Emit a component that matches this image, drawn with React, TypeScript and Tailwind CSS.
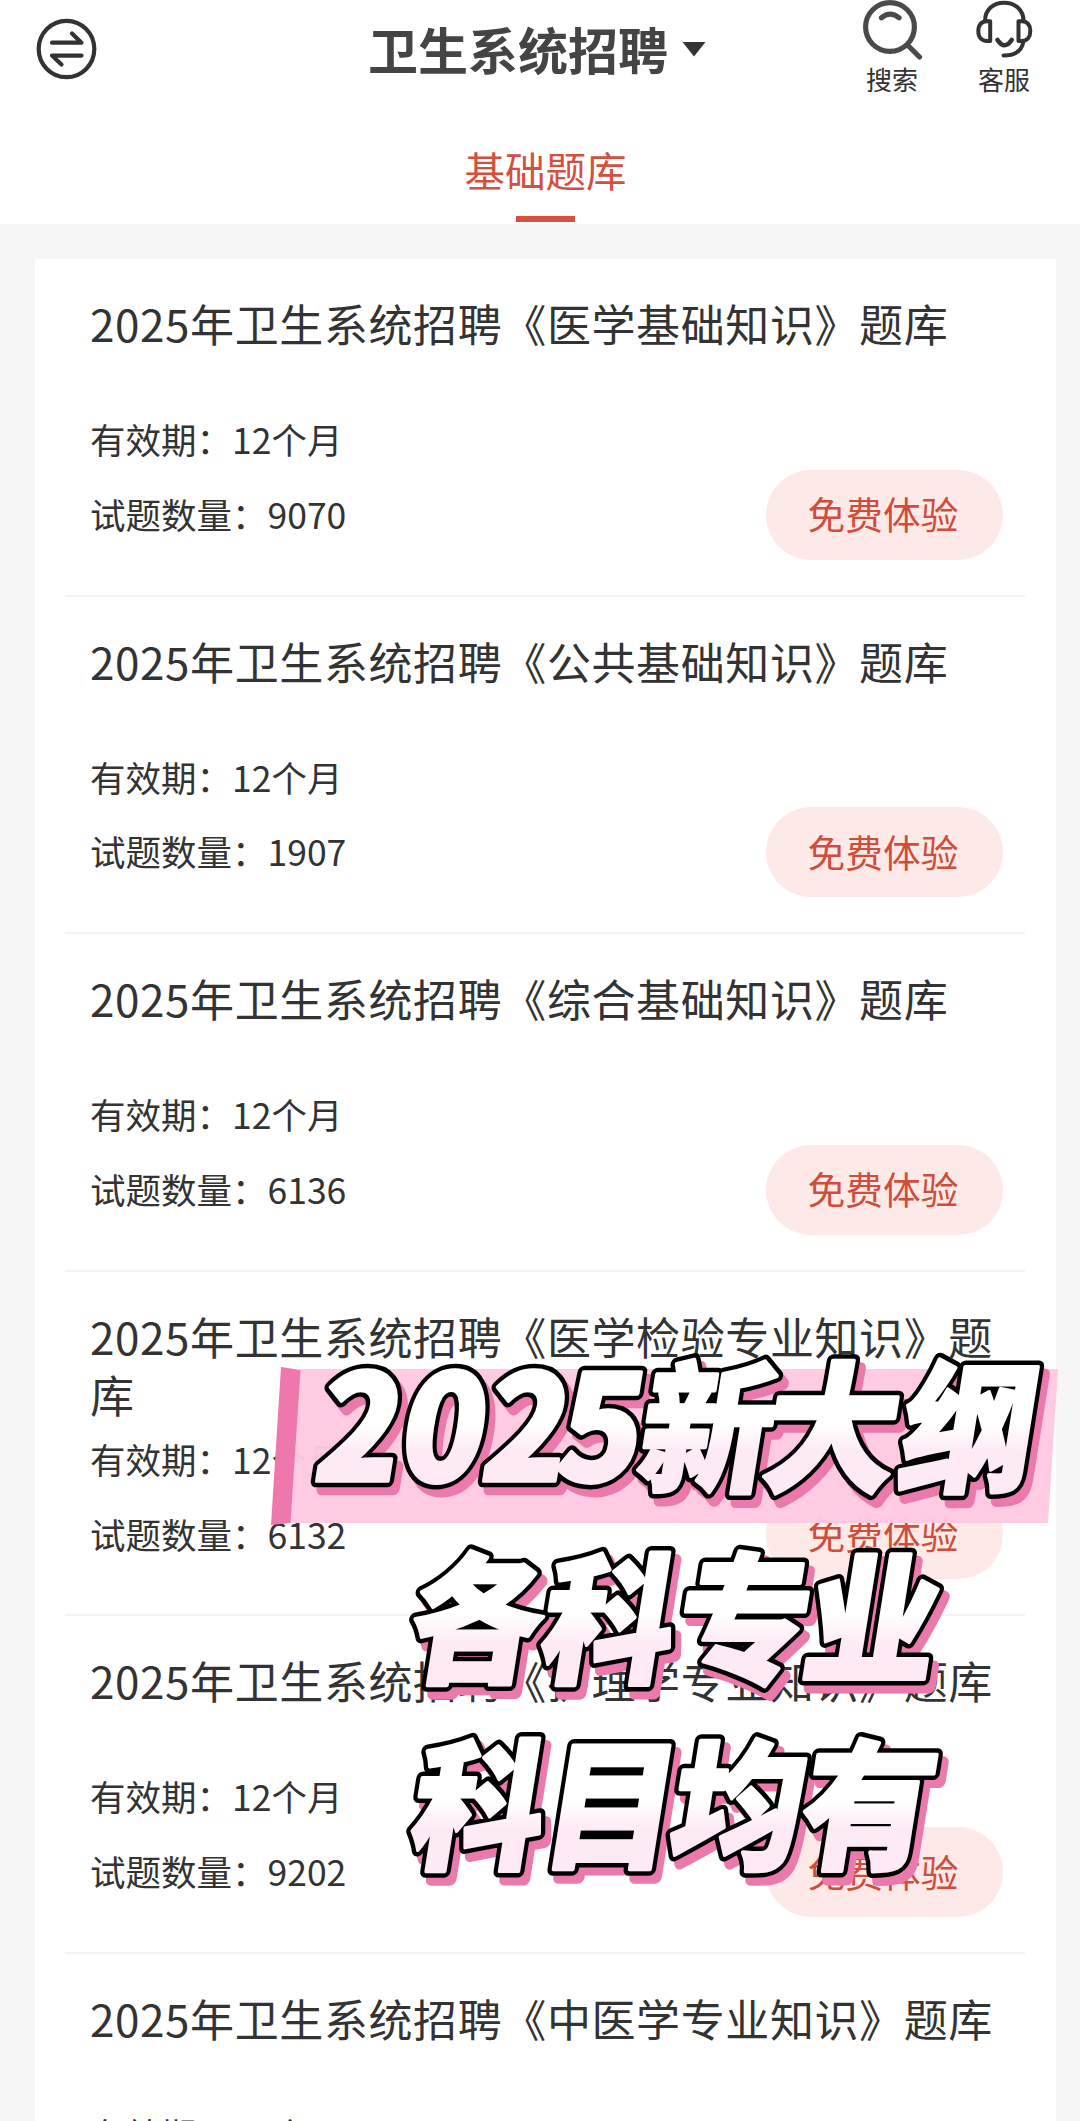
import React from "react";

type Bank = { subject: string; count: number };

const banks: Bank[] = [
  { subject: "医学基础知识", count: 9070 },
  { subject: "公共基础知识", count: 1907 },
  { subject: "综合基础知识", count: 6136 },
  { subject: "医学检验专业知识", count: 6132 },
  { subject: "护理学专业知识", count: 9202 },
  { subject: "中医学专业知识", count: 8120 },
];

function SwitchIcon() {
  return (
    <svg width="62" height="62" viewBox="0 0 62 62" fill="none" stroke="#333333" strokeWidth="4.2" strokeLinecap="round" strokeLinejoin="round">
      <ellipse cx="30.5" cy="31" rx="27.800" ry="28.2" />
      <path d="M16 24.7H45.500L36 15.500" />
      <path d="M45.500 37.6H16L25.500 46.600" />
    </svg>
  );
}

function SearchIcon() {
  return (
    <svg width="60" height="60" viewBox="0 0 60 60" fill="none" stroke="#4a4a4a" strokeWidth="5.2" strokeLinecap="round">
      <circle cx="27" cy="27" r="24.4" />
      <path d="M18.500 17.800Q27 10.500 36 17.800" />
      <path d="M45 45.500L56.500 57" />
    </svg>
  );
}

function ServiceIcon() {
  return (
    <svg width="60" height="60" viewBox="0 0 60 60" fill="none" stroke="#333333" strokeWidth="4" strokeLinecap="round" strokeLinejoin="round">
      <path d="M10 21C10 9.500 18.500 2.800 29.100 2.800S48.500 9.500 48.500 21" />
      <path d="M15.200 21.200H12C6.500 21.200 3.300 25 3.300 31S6.500 41 12 41H15.200Z" />
      <path d="M43.500 21.200H46.800C52.300 21.200 55.300 25 55.300 31S52.300 41 46.800 41H43.500Z" />
      <path d="M48.500 41.500C47 50 40.500 55.500 28.500 55.500" />
      <path d="M22.500 40Q29.500 50.500 36.700 40" strokeWidth="4.600" />
    </svg>
  );
}

function Header() {
  return (
    <header className="h-[224px] bg-white">
      <div className="flex h-[100px] items-start pl-[36px] pr-[45px]">
        <button className="mt-[18px] w-[332px]" aria-label="切换">
          <SwitchIcon />
        </button>
        <div className="flex h-[98px] items-center gap-[14px]">
          <h1 className="pb-[2px] text-[50px] font-bold leading-none text-[#444444]">卫生系统招聘</h1>
          <svg width="24" height="15" viewBox="0 0 24 15" fill="#333333">
            <path d="M0.500 0H23.500L12 14.500Z" />
          </svg>
        </div>
        <div className="ml-auto flex gap-[52px]">
          <button className="flex w-[60px] flex-col items-center text-[#333333]">
            <SearchIcon />
            <span className="mr-[2px] text-[26px] leading-[38px]">搜索</span>
          </button>
          <button className="flex w-[60px] flex-col items-center text-[#333333]">
            <ServiceIcon />
            <span className="mr-[2px] text-[26px] leading-[38px]">客服</span>
          </button>
        </div>
      </div>
      <nav className="flex flex-col items-center pl-[11px] pt-[41px]">
        <span className="text-[40.500px] leading-[58px] text-[#d4503e]">基础题库</span>
        <span className="mt-[17px] h-[6px] w-[59px] bg-[#d6503f]" />
      </nav>
    </header>
  );
}

function BankRow({ bank }: { bank: Bank }) {
  return (
    <li className="border-b-2 border-[#f3f3f3] pl-[25px] pr-[22px] pt-[35px] last:border-b-0">
      <h2 className="mb-[-1px] min-h-[109px] text-[44px] leading-[58px] tracking-[0.600px]">
        2025年卫生系统招聘《{bank.subject}》题库
      </h2>
      <div className="flex items-end justify-between pb-[43px]">
        <div className="text-[35.500px] leading-[74.800px]">
          <p>有效期：12个月</p>
          <p>试题数量：{bank.count}</p>
        </div>
        <button className="mb-[-8px] h-[90px] w-[237px] rounded-full bg-[#fdeae8] pb-[3px] text-[37.700px] leading-none text-[#cf4d3a]">
          <span className="mr-[3px]">免费体验</span>
        </button>
      </div>
    </li>
  );
}

function StickerLine({ id, children }: { id: string; children: React.ReactNode }) {
  return (
    <g strokeLinejoin="round">
      <use href={"#" + id} x="7" y="8" fill="#eb79ac" stroke="#eb79ac" strokeWidth="12" />
      <use href={"#" + id} fill="#000000" stroke="#000000" strokeWidth="12" />
      <g fill={"url(#" + id + "-fill)"} stroke={"url(#" + id + "-fill)"} strokeWidth="3.500">
        <g id={id}>{children}</g>
      </g>
    </g>
  );
}

function Fade({ id }: { id: string }) {
  return (
    <linearGradient id={id} gradientUnits="userSpaceOnUse" x1="0" x2="0" y1="-120" y2="12">
      <stop offset="0.500" stopColor="#ffffff" />
      <stop offset="0.700" stopColor="#fdeaf5" />
      <stop offset="1" stopColor="#fdeaf4" />
    </linearGradient>
  );
}

function PromoSticker() {
  return (
    <svg
      className="pointer-events-none absolute left-[260px] top-[1340px] font-black"
      width="820"
      height="560"
      viewBox="260 1340 820 560"
      textAnchor="middle"
    >
      <defs>
        <Fade id="promo-a-fill" />
        <Fade id="promo-b-fill" />
        <Fade id="promo-c-fill" />
      </defs>
      <path d="M300 1369H1058L1048 1523H290Z" fill="#ffc9e1" fillOpacity="0.970" />
      <path d="M281 1367L300.500 1370L290.500 1523L271 1525Z" fill="#ee78ac" />
      <g transform="translate(0 1481) skewX(-9) scale(1 1.060)">
        <StickerLine id="promo-a">
          <text fontSize="133" y="0">
            <tspan fontSize="138" x="353 437 520 594">2025</tspan>
            <tspan x="700 825 961">新大纲</tspan>
          </text>
        </StickerLine>
      </g>
      <g transform="translate(0 1672) skewX(-9) scale(1 1.060)">
        <StickerLine id="promo-b">
          <text fontSize="132" x="470 602 736 865" y="0">各科专业</text>
        </StickerLine>
      </g>
      <g transform="translate(0 1858) skewX(-9) scale(1 1.060)">
        <StickerLine id="promo-c">
          <text fontSize="132" x="472 604 731 861" y="0">科目均有</text>
        </StickerLine>
      </g>
    </svg>
  );
}

export default function App() {
  return (
    <div className="relative h-[2121px] w-[1080px] overflow-hidden bg-[#f6f6f6] font-['Noto_Sans_CJK_SC',sans-serif] text-[#333333]">
      <Header />
      <main className="ml-[35px] mr-[24px] mt-[35px] bg-white pl-[30px] pr-[31px]">
        <ul>
          {banks.map((bank) => (
            <BankRow key={bank.subject} bank={bank} />
          ))}
        </ul>
      </main>
      <PromoSticker />
    </div>
  );
}
